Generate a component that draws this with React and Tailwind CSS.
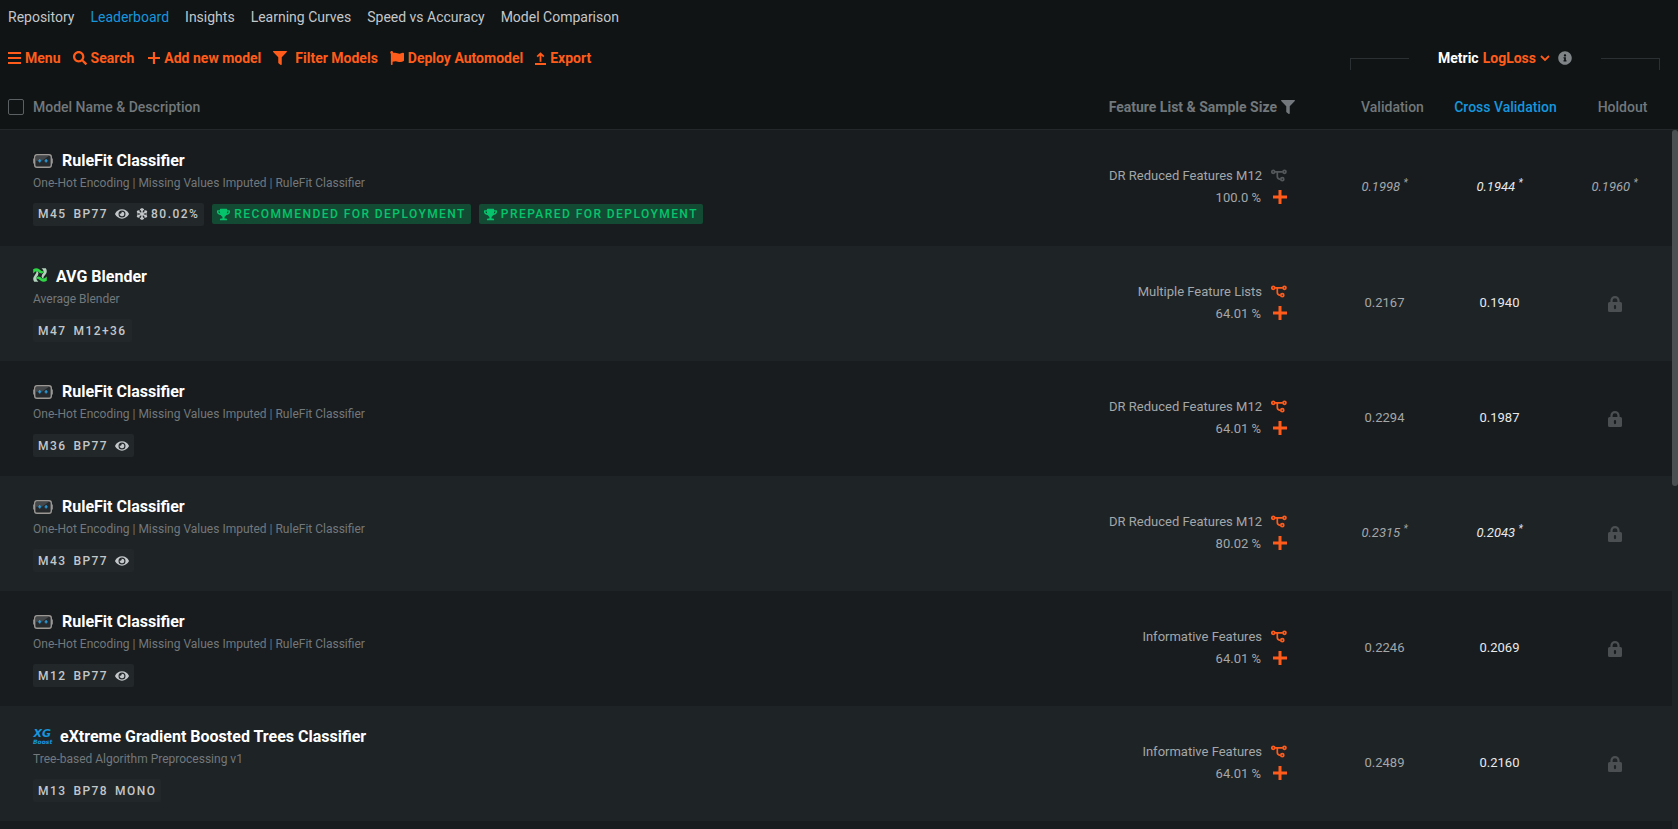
import React, { useState } from 'react';
import {
  FaSearch,
  FaFilter,
  FaFlag,
  FaEye,
  FaSnowflake,
  FaTrophy,
  FaInfoCircle,
} from 'react-icons/fa';

const tabs = ['Repository', 'Leaderboard', 'Insights', 'Learning Curves', 'Speed vs Accuracy', 'Model Comparison'];

const ruleFit = {
  icon: 'robot',
  name: 'RuleFit Classifier',
  description: 'One-Hot Encoding | Missing Values Imputed | RuleFit Classifier',
};

const models = [
  {
    ...ruleFit,
    id: 'M45',
    blueprint: 'BP77',
    eye: true,
    frozen: '80.02%',
    tags: ['Recommended for deployment', 'Prepared for deployment'],
    features: 'DR Reduced Features M12',
    sample: '100.0 %',
    disabled: true,
    starred: true,
    validation: '0.1998',
    cross: '0.1944',
    holdout: '0.1960',
  },
  {
    icon: 'blender',
    name: 'AVG Blender',
    description: 'Average Blender',
    id: 'M47',
    blueprint: 'M12+36',
    features: 'Multiple Feature Lists',
    sample: '64.01 %',
    validation: '0.2167',
    cross: '0.1940',
  },
  {
    ...ruleFit,
    id: 'M36',
    blueprint: 'BP77',
    eye: true,
    features: 'DR Reduced Features M12',
    sample: '64.01 %',
    validation: '0.2294',
    cross: '0.1987',
  },
  {
    ...ruleFit,
    id: 'M43',
    blueprint: 'BP77',
    eye: true,
    features: 'DR Reduced Features M12',
    sample: '80.02 %',
    starred: true,
    validation: '0.2315',
    cross: '0.2043',
  },
  {
    ...ruleFit,
    id: 'M12',
    blueprint: 'BP77',
    eye: true,
    features: 'Informative Features',
    sample: '64.01 %',
    validation: '0.2246',
    cross: '0.2069',
  },
  {
    icon: 'xgboost',
    name: 'eXtreme Gradient Boosted Trees Classifier',
    description: 'Tree-based Algorithm Preprocessing v1',
    id: 'M13',
    blueprint: 'BP78',
    mono: true,
    features: 'Informative Features',
    sample: '64.01 %',
    validation: '0.2489',
    cross: '0.2160',
  },
];

const MenuIcon = () => (
  <svg width="13" height="12" viewBox="0 0 13 12" fill="currentColor">
    <path d="M0 0h13v2H0zM0 5h13v2H0zM0 10h13v2H0z" />
  </svg>
);

const PlusIcon = ({ size, stroke }) => (
  <svg width={size} height={size} viewBox="0 0 14 14" stroke="currentColor" strokeWidth={stroke}>
    <path d="M7 0v14M0 7h14" />
  </svg>
);

const ExportIcon = () => (
  <svg width="11" height="13" viewBox="0 0 11 13" fill="none" stroke="currentColor" strokeWidth="1.8">
    <path d="M5.5 9.8V1.4M2.2 4.7l3.3-3.3 3.3 3.3M0 12h11" />
  </svg>
);

const ChevronIcon = () => (
  <svg width="10" height="7" viewBox="0 0 10 7" fill="none" stroke="currentColor" strokeWidth="1.8">
    <path d="M1 1l4 4 4-4" />
  </svg>
);

const LockIcon = ({ className }) => (
  <svg width="14" height="16" viewBox="0 0 14 16" className={className}>
    <path d="M3.5 7V4.6a3.5 3.5 0 0 1 7 0V7" fill="none" stroke="currentColor" strokeWidth="2.2" />
    <path
      fillRule="evenodd"
      fill="currentColor"
      d="M1.5 6h11A1.5 1.5 0 0 1 14 7.5v7a1.5 1.5 0 0 1-1.5 1.5h-11A1.5 1.5 0 0 1 0 14.5v-7A1.5 1.5 0 0 1 1.5 6zM7 9a1.1 1.1 0 0 0-1.1 1.1v2a1.1 1.1 0 0 0 2.2 0v-2A1.1 1.1 0 0 0 7 9z"
    />
  </svg>
);

const BlueprintIcon = () => (
  <svg width="16" height="13" viewBox="0 0 16 13" fill="none" stroke="currentColor" strokeWidth="1.7">
    <circle cx="2.3" cy="2.8" r="1.5" />
    <circle cx="13.5" cy="2.8" r="1.5" />
    <circle cx="11.3" cy="10.2" r="1.5" />
    <path d="M4 2.8h7.8M6.3 3v4.6q0 2.6 3.2 2.8" />
  </svg>
);

const RobotIcon = () => (
  <svg width="20" height="14" viewBox="0 0 20 14">
    <path d="M.9 4.5v5M19.1 4.5v5" stroke="#8b8b8b" strokeWidth="1.6" />
    <rect x="1.7" y="0.7" width="16.6" height="12.6" rx="2.2" fill="#26292b" stroke="#9a9794" strokeWidth="1.4" />
    <path d="M3 1.8h13l-7 5H3z" fill="#44484a" />
    <path d="M6.7 5v3.6M5.2 6.8h3M13.1 5v3.6M11.6 6.8h3" stroke="#2b9fe0" strokeWidth="1.2" />
  </svg>
);

const blade = 'M.2 5.4V1.2Q3.6-1 6.6 1.6Q8.4 3.6 11 3.6Q10.4 5.6 8.2 5.4Q6 5 5 3.6Q2.6 2.6.2 5.4z';

const BlenderIcon = () => (
  <svg width="14" height="18" viewBox="0 0 14 18">
    <path d={blade} fill="#2fd645" />
    <path d={blade} fill="#b4d3bc" transform="rotate(90 7 7)" />
    <path d={blade} fill="#2fd645" transform="rotate(180 7 7)" />
    <path d={blade} fill="#b4d3bc" transform="rotate(270 7 7)" />
  </svg>
);

const XGBoostIcon = () => (
  <svg
    width="18"
    height="16"
    viewBox="0 0 36 32"
    className="overflow-visible fill-[#1696dc] font-['DejaVu_Sans',sans-serif] font-bold italic"
  >
    <text x="1" y="16" fontSize="22">XG</text>
    <text x="0" y="29" fontSize="12">Boost</text>
  </svg>
);

const icons = { robot: RobotIcon, blender: BlenderIcon, xgboost: XGBoostIcon };

const Value = ({ value, starred, className }) => (
  <td className={`text-center text-[13px] ${className}`}>
    {starred ? (
      <em>
        {value} <sup className="text-[10px]">*</sup>
      </em>
    ) : (
      value
    )}
  </td>
);

const ModelRow = ({ model }) => {
  const Icon = icons[model.icon];

  return (
    <tr className="h-[115px] first:h-[117px] odd:bg-[#181c1f] even:bg-[#1e2326]">
      <td className="pl-[33px] pt-[19px] align-top">
        <div className="flex h-6 items-center gap-[9px]">
          <Icon />
          <a href="#model" className="text-base font-bold text-white">{model.name}</a>
        </div>
        <p className="text-xs leading-5 text-[#72787b]">{model.description}</p>
        <div className="mt-2.5 flex items-center gap-2 text-xs font-medium tracking-[0.12em]">
          <div className="flex h-[23px] items-center gap-[7px] rounded-xs bg-[#22272a] px-[5px] text-[#c4c7c9]">
            <span>{model.id}</span>
            <span>{model.blueprint}</span>
            {model.mono && <span>MONO</span>}
            {model.eye && <FaEye size={14} />}
            {model.frozen && (
              <span className="flex items-center gap-[3px]">
                <FaSnowflake size={12} />
                {model.frozen}
              </span>
            )}
          </div>
          {model.tags?.map((tag) => (
            <div key={tag} className="flex h-5 items-center gap-1 rounded-xs bg-[#134a33] px-[5px] uppercase text-[#05c46b]">
              <FaTrophy size={13} />
              {tag}
            </div>
          ))}
        </div>
      </td>
      <td className="text-[13px] text-[#a3a7a9]">
        <div className="flex h-[22px] items-center justify-end gap-[9px] pr-10">
          {model.features}
          <button
            type="button"
            aria-label="Show blueprint"
            className={model.disabled ? 'pb-0.5 text-[#54585a]' : 'pb-0.5 text-[#ff5c1b]'}
          >
            <BlueprintIcon />
          </button>
        </div>
        <div className="flex h-[22px] items-center justify-end gap-3 pr-10">
          {model.sample}
          <button type="button" aria-label="Add sample size" className="pb-1 text-[#ff5c1b]">
            <PlusIcon size={14} stroke={3} />
          </button>
        </div>
      </td>
      <Value value={model.validation} starred={model.starred} className="text-[#a3a7a9]" />
      <Value value={model.cross} starred={model.starred} className="text-[#e8e9ea]" />
      {model.holdout ? (
        <Value value={model.holdout} starred={model.starred} className="text-[#a3a7a9]" />
      ) : (
        <td>
          <LockIcon className="mx-auto text-[#4b4f51]" />
        </td>
      )}
    </tr>
  );
};

const App = () => {
  const [activeTab, setActiveTab] = useState('Leaderboard');

  return (
    <div className="flex h-screen flex-col overflow-hidden bg-[#101415] font-[Roboto,sans-serif] text-sm">
      <nav className="flex h-[34px] items-center gap-4 px-2 text-[#c4c7c9]">
        {tabs.map((tab) => (
          <a
            key={tab}
            href="#tab"
            onClick={() => setActiveTab(tab)}
            className={tab === activeTab ? 'text-[#1696dc]' : ''}
          >
            {tab}
          </a>
        ))}
      </nav>

      <div className="flex h-12 items-center gap-3 pl-2 pr-[18px] font-bold text-[#ff5c1b]">
        <button type="button" className="flex items-center gap-1">
          <MenuIcon />
          Menu
        </button>
        <button type="button" className="flex items-center gap-1">
          <FaSearch size={14} />
          Search
        </button>
        <button type="button" className="flex items-center gap-1 pl-0.5">
          <PlusIcon size={12} stroke={2.6} />
          Add new model
        </button>
        <button type="button" className="flex items-center gap-2">
          <FaFilter size={14} />
          Filter Models
        </button>
        <button type="button" className="flex items-center gap-1">
          <FaFlag size={14} />
          Deploy Automodel
        </button>
        <button type="button" className="flex items-center gap-1">
          <ExportIcon />
          Export
        </button>

        <div className="ml-auto flex w-[310px] items-center justify-between">
          <div className="mt-3 h-3 w-[59px] border-l border-t border-[#2b3033]" />
          <div className="flex items-center gap-1">
            <span className="text-white">Metric</span>
            <button type="button" className="flex items-center gap-1">
              LogLoss
              <ChevronIcon />
            </button>
            <FaInfoCircle size={14} className="ml-1 text-[#7f8487]" />
          </div>
          <div className="mt-3 h-3 w-[59px] border-r border-t border-[#2b3033]" />
        </div>
      </div>

      <div className="flex min-h-0 flex-1">
        <div className="min-w-0 flex-1">
          <table className="w-full table-fixed border-collapse">
            <thead>
              <tr className="h-[47px] text-[#72787b]">
                <th className="pl-2 pt-1 text-left font-medium">
                  <label className="flex items-center gap-[9px]">
                    <input
                      type="checkbox"
                      className="size-4 appearance-none rounded-xs border border-[#5b6063]"
                    />
                    Model Name &amp; Description
                  </label>
                </th>
                <th className="w-[240px] pr-8 pt-1">
                  <button type="button" className="flex w-full items-center justify-end gap-1 whitespace-nowrap font-bold">
                    Feature List &amp; Sample Size
                    <FaFilter size={14} />
                  </button>
                </th>
                <th className="w-[115px] pl-4 pt-1 font-medium">Validation</th>
                <th className="w-[115px] whitespace-nowrap pl-3 pt-1 font-medium text-[#1696dc]">Cross Validation</th>
                <th className="w-[115px] pl-4 pt-1 font-medium">Holdout</th>
              </tr>
            </thead>
            <tbody className="border-t border-[#24282b]">
              {models.map((model) => (
                <ModelRow key={model.id} model={model} />
              ))}
              <tr className="h-[115px] bg-[#181c1f]">
                <td colSpan={5} />
              </tr>
            </tbody>
          </table>
        </div>
        <div className="mt-[47px] w-1.5 border-t border-[#24282b] bg-[#1e2326]">
          <div className="h-[51%] rounded-full bg-[#4b4f51]" />
        </div>
      </div>
    </div>
  );
};

export default App;
